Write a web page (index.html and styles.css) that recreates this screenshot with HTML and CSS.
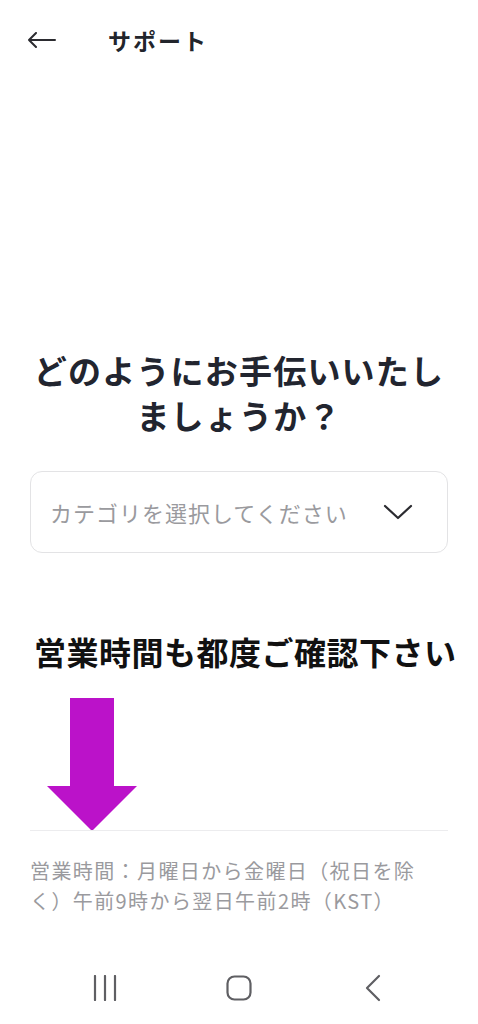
FILE: index.html
```html
<!DOCTYPE html>
<html lang="ja">
<head>
    <meta charset="UTF-8">
    <meta name="viewport" content="width=device-width, initial-scale=1.0">
    <title>サポート</title>
    <link rel="stylesheet" href="styles.css">
</head>
<body>

    <div class="screen">
        <!-- ヘッダー -->
        <div class="header">
            <svg class="back" width="28" height="16" viewBox="0 0 28 16">
                <path d="M1 8 H27 M8 1 L1 8 L8 15" fill="none" stroke="#2b2b30" stroke-width="2" stroke-linecap="round" stroke-linejoin="round"/>
            </svg>
            <div class="title">サポート</div>
        </div>

        <div class="content">
            <h1 class="question">どのようにお手伝いいたし<br>ましょうか？</h1>

            <div class="select">
                <span class="placeholder">カテゴリを選択してください</span>
                <svg class="chevron" width="30" height="16" viewBox="0 0 30 16">
                    <path d="M2 2 L15 14 L28 2" fill="none" stroke="#2b2b30" stroke-width="2.2" stroke-linecap="round" stroke-linejoin="round"/>
                </svg>
            </div>

            <div class="notice">営業時間も都度ご確認下さい</div>

            <svg class="pointer" width="92" height="134" viewBox="0 0 92 134">
                <polygon points="23,0 67,0 67,88 90,88 45,133 0,88 23,88" fill="#bb12c9"/>
            </svg>
            <div class="divider"></div>

            <p class="hours">営業時間：月曜日から金曜日（祝日を除く）午前9時から翌日午前2時（KST）</p>
        </div>

        <!-- ナビゲーションバー -->
        <div class="navbar">
            <div class="nav-item">
                <svg width="24" height="26" viewBox="0 0 24 26">
                    <path d="M2 1 V25 M12 1 V25 M22 1 V25" stroke="#5f5f63" stroke-width="2.2" stroke-linecap="round"/>
                </svg>
            </div>
            <div class="nav-item">
                <svg width="26" height="26" viewBox="0 0 26 26">
                    <rect x="1.5" y="1.5" width="23" height="23" rx="7" fill="none" stroke="#5f5f63" stroke-width="2.2"/>
                </svg>
            </div>
            <div class="nav-item">
                <svg width="16" height="28" viewBox="0 0 16 28">
                    <path d="M14 2 L2 14 L14 26" fill="none" stroke="#5f5f63" stroke-width="2.2" stroke-linecap="round" stroke-linejoin="round"/>
                </svg>
            </div>
        </div>
    </div>

</body>
</html>
```

FILE: styles.css
```css
* {
    margin: 0;
    padding: 0;
    box-sizing: border-box;
    font-family: 'Noto Sans CJK JP', 'Noto Sans', sans-serif;
}

body {
    background-color: #fff;
    width: 478px;
    height: 1024px;
    overflow: hidden;
}

.screen {
    display: flex;
    flex-direction: column;
    height: 100%;
}

/* ヘッダー */
.header {
    display: flex;
    align-items: center;
    height: 80px;
    padding-left: 28px;
    gap: 52px;
}

.back {
    display: block;
}

.title {
    font-size: 23px;
    font-weight: bold;
    letter-spacing: 2px;
    color: #22252c;
}

.content {
    flex-grow: 1;
    padding: 0 30px;
    display: flex;
    flex-direction: column;
}

.question {
    margin-top: 268px;
    font-size: 33px;
    line-height: 45px;
    font-weight: bold;
    letter-spacing: 1.2px;
    text-align: center;
    color: #22252f;
}

.select {
    margin-top: 33px;
    height: 82px;
    border: 1.5px solid #e3e3e5;
    border-radius: 12px;
    display: flex;
    align-items: center;
    justify-content: space-between;
    padding: 0 34px 0 19px;
}

.placeholder {
    font-size: 22px;
    letter-spacing: 1px;
    color: #9a9a9e;
}

.chevron {
    display: block;
}

.notice {
    margin-top: 76px;
    margin-left: 4px;
    font-size: 32px;
    line-height: 44px;
    font-weight: bold;
    letter-spacing: 0.5px;
    color: #111;
    white-space: nowrap;
}

.pointer {
    display: block;
    margin-top: 25px;
    margin-left: 17px;
}

.divider {
    height: 1px;
    margin-top: -2px;
    background-color: #ececee;
}

.hours {
    margin-top: 25px;
    max-width: 395px;
    font-size: 20px;
    line-height: 30px;
    letter-spacing: 1.4px;
    color: #9a9a9e;
}

/* ナビゲーションバー */
.navbar {
    height: 78px;
    display: flex;
    justify-content: center;
    align-items: center;
    padding-top: 6px;
}

.nav-item {
    width: 134px;
    display: flex;
    justify-content: center;
}
```
